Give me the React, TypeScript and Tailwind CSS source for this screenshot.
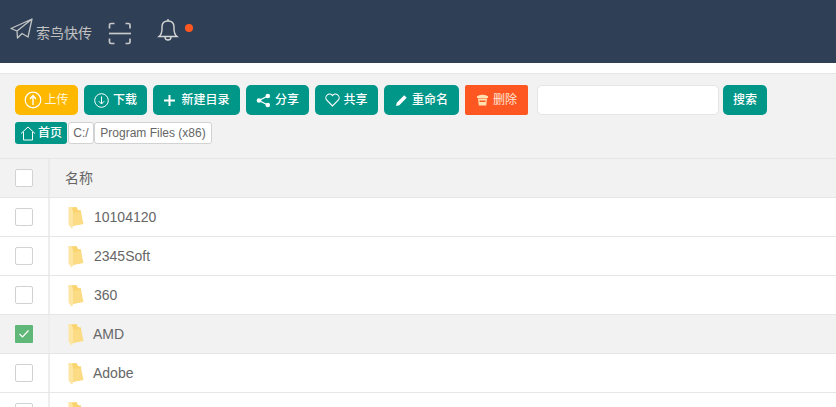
import React from "react";

const font = { fontFamily: '"Liberation Sans","Noto Sans CJK SC",sans-serif' };

function Folder() {
  return (
    <svg width="16" height="23" viewBox="0 0 16 23" className="shrink-0">
      <path d="M0.5 1.5 L8.5 1 L10 4 L13 4.5 L13.5 18 L4 20 Z" fill="#fad56f" />
      <path d="M4.5 7 L13 6 L15.5 18 L4.5 20 Z" fill="#fbdb84" />
      <path d="M0.5 1.5 L3.5 1 L5 5 L5 21 L3.5 22.5 L0.5 18.5 Z" fill="#fde6a4" />
    </svg>
  );
}

function Btn({ children, className = "bg-[#009688] rounded-[5px]", w }: { children: React.ReactNode; className?: string; w: string }) {
  return (
    <button className={`h-[30px] flex items-center justify-center text-white text-xs font-medium shrink-0 ${w} ${className}`}>
      {children}
    </button>
  );
}

function Row({ name, checked, tight }: { name: string; checked?: boolean; tight?: boolean }) {
  return (
    <div className={`h-[39px] flex border-b border-[#e6e6e6] shrink-0 ${checked ? "bg-[#f2f2f2]" : "bg-white"}`}>
      <div className="w-[50px] shrink-0 border-r-2 border-[#eeeeee] flex items-center pl-[15px]">
        {checked ? (
          <div className="w-[18px] h-[18px] bg-[#5fb878] rounded-[1px] flex items-center justify-center">
            <svg width="12" height="10" viewBox="0 0 12 10" fill="none" stroke="#fff" strokeWidth="1.2">
              <path d="M1.5 5 L4.5 8 L10.5 1.5" />
            </svg>
          </div>
        ) : (
          <div className="w-[18px] h-[18px] bg-white border border-[#d2d2d2] rounded-[2px]" />
        )}
      </div>
      <div className="flex items-center pl-[18px]">
        <Folder />
        <span className={`text-sm text-[#666] ${tight ? "ml-[9px]" : "ml-[10px]"}`}>{name}</span>
      </div>
    </div>
  );
}

export default function App() {
  return (
    <div className="h-screen overflow-hidden bg-white flex flex-col" style={font}>
      <header className="h-[63px] bg-[#2f4056] flex items-start shrink-0 pl-[10px] pt-[19px] text-[#c2c2c2]">
        <svg width="23" height="22" viewBox="0 0 23 22" fill="none" stroke="#c2c2c2" strokeWidth="1.3" strokeLinejoin="round" className="-mt-[1px]">
          <path d="M22 1 L1 10.5 L7 13 L22 1 L18 19 L12 15.5 L7.5 20 L7 13" />
        </svg>
        <span className="text-sm ml-[3px] mt-[5px] leading-[18px]">索鸟快传</span>
        <svg width="24" height="23" viewBox="0 0 24 23" fill="none" stroke="#c8c8c8" strokeWidth="1.7" className="ml-[16px] mt-[3px]">
          <path d="M1.5 6.5 V3 Q1.5 1.5 3 1.5 H6.5 M17.5 1.5 H20.5 Q22 1.5 22 3 V6.5 M1.5 16.5 V20 Q1.5 21.5 3 21.5 H6.5 M17.5 21.5 H20.5 Q22 21.5 22 20 V16.5" />
          <path d="M1 11.5 H23" />
        </svg>
        <svg width="22" height="24" viewBox="0 0 22 24" fill="none" stroke="#d5d5d5" strokeWidth="1.4" className="ml-[25px] -mt-[1px]">
          <path d="M2 18.5 Q5 16 5 11 V9 Q5 3 11 3 Q17 3 17 9 V11 Q17 16 20 18.5 Z" />
          <path d="M11 3 V1" />
          <path d="M8 19 Q8 22 11 22 Q14 22 14 19" />
        </svg>
        <span className="w-2 h-2 rounded-full bg-[#ff5722] ml-[6px] mt-[5px]" />
      </header>
      <div className="h-[10px] bg-white shrink-0" />
      <div className="flex-1 bg-[#f2f2f2] border-t border-[#e6e6e6] flex flex-col min-h-0">
        <div className="h-[84px] pt-[11px] pl-[15px] shrink-0">
          <div className="flex gap-[6px] items-center">
            <Btn w="w-[63px] gap-[2px]" className="bg-[#ffb800] rounded-[5px]">
              <svg width="18" height="18" viewBox="0 0 18 18" fill="none" stroke="#fff" strokeWidth="1.2">
                <circle cx="9" cy="9" r="7.8" />
                <path d="M9 14 V5 M6 8 L9 4.5 L12 8" strokeWidth="1.4" />
              </svg>
              <span className="font-normal text-[#fff6dc]">上传</span>
            </Btn>
            <Btn w="w-[63px] gap-[4px]">
              <svg width="15" height="15" viewBox="0 0 15 15" fill="none" stroke="#fff" strokeWidth="1">
                <circle cx="7.5" cy="7.5" r="6.8" />
                <path d="M7.5 3.5 V11 M4.8 8.2 L7.5 11 L10.2 8.2" />
              </svg>
              <span>下载</span>
            </Btn>
            <Btn w="w-[87px] gap-[5px]">
              <svg width="13" height="13" viewBox="0 0 13 13" stroke="#fff" strokeWidth="2">
                <path d="M6.5 1 V12 M1 6.5 H12" />
              </svg>
              <span>新建目录</span>
            </Btn>
            <Btn w="w-[63px] gap-[4px]">
              <svg width="15" height="15" viewBox="0 0 15 15" fill="#fff" stroke="#fff">
                <circle cx="11.8" cy="3" r="2.3" stroke="none" />
                <circle cx="3" cy="7.5" r="2.3" stroke="none" />
                <circle cx="11.8" cy="12" r="2.3" stroke="none" />
                <path d="M11.8 3 L3 7.5 L11.8 12" fill="none" strokeWidth="1.3" />
              </svg>
              <span>分享</span>
            </Btn>
            <Btn w="w-[63px] gap-[3px]">
              <svg width="15" height="14" viewBox="0 0 15 14" fill="none" stroke="#fff" strokeWidth="1.1">
                <path d="M7.5 13 L1.6 7 A3.6 3.6 0 0 1 7.5 2.6 A3.6 3.6 0 0 1 13.4 7 Z" />
              </svg>
              <span>共享</span>
            </Btn>
            <Btn w="w-[75px] gap-[4px]">
              <svg width="13" height="13" viewBox="0 0 12 12" fill="#fff">
                <path d="M1 11 L1.6 8 L8.5 1.2 L10.8 3.4 L4 10.4 Z" />
              </svg>
              <span>重命名</span>
            </Btn>
            <Btn w="w-[63px] gap-[4px]" className="bg-[#ff5722] rounded-[2px]">
              <svg width="13" height="12" viewBox="0 0 13 12" fill="#ffe1b0">
                <path d="M1 2.2 Q6.5 -0.5 12 2.2 L12 4 L1 4 Z" />
                <path d="M2 4.6 H11 L10.2 11.5 H2.8 Z M3.5 6.5 V8 H9.5 V6.5 Z" fillRule="evenodd" />
              </svg>
              <span className="font-normal text-[#ffe6d6]">删除</span>
            </Btn>
            <input className="ml-[3px] w-[182px] h-[30px] bg-white border border-[#e6e6e6] rounded-[5px] shrink-0" />
            <Btn w="w-[44px] -ml-[2px]">搜索</Btn>
          </div>
          <div className="flex items-center mt-[7px] text-xs">
            <div className="w-[52px] h-[22px] bg-[#009688] text-white font-medium rounded-[3px] flex items-center justify-center gap-[2px]">
              <svg width="16" height="15" viewBox="0 0 16 15" fill="none" stroke="#fff" strokeWidth="1" strokeLinejoin="round">
                <path d="M1 7.5 L8 1 L15 7.5 M3.5 6 V14 H12.5 V6" />
              </svg>
              <span>首页</span>
            </div>
            <div className="ml-[1px] w-[26px] h-[22px] bg-white border border-[#d2d2d2] rounded-[3px] flex items-center justify-center text-[#666]">C:/</div>
            <div className="w-[118px] h-[22px] bg-white border border-[#d2d2d2] rounded-[3px] flex items-center justify-center text-[#666]">Program Files (x86)</div>
          </div>
        </div>
        <div className="h-[40px] flex border-y border-[#e6e6e6] shrink-0">
          <div className="w-[50px] shrink-0 border-r-2 border-[#eaeaea] flex items-center pl-[15px]">
            <div className="w-[18px] h-[18px] bg-white border border-[#d2d2d2] rounded-[2px]" />
          </div>
          <div className="flex items-center pl-[15px] text-sm text-[#666]">名称</div>
        </div>
        <Row name="10104120" />
        <Row name="2345Soft" />
        <Row name="360" />
        <Row name="AMD" checked tight />
        <Row name="Adobe" tight />
        <Row name="" />
      </div>
    </div>
  );
}
